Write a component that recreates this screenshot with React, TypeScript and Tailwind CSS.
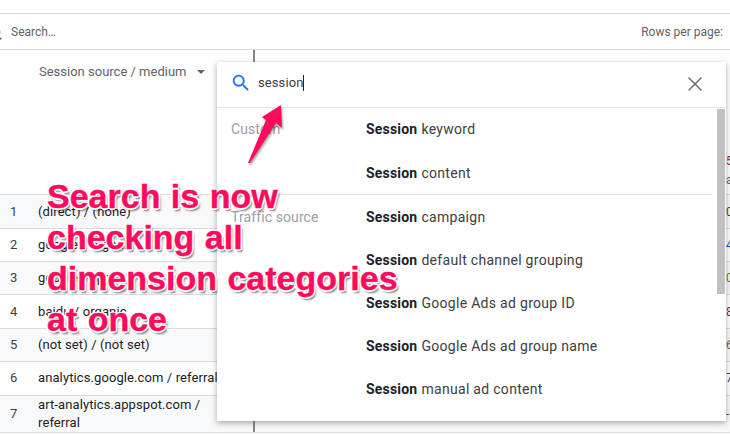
import React from "react";
import { Search, X } from "lucide-react";

const rows = [
  { n: "1", label: "(direct) / (none)", h: "h-[34px]", bg: "bg-[#f8f9fa]", tail: "0", tailColor: "text-[#7a3030]" },
  { n: "2", label: "google / organic", h: "h-[33px]", bg: "bg-white", tail: "4", tailColor: "text-[#1a4f9c]" },
  { n: "3", label: "google / cpc", h: "h-[33px]", bg: "bg-[#f8f9fa]", tail: "0", tailColor: "text-[#a06a20]" },
  { n: "4", label: "baidu / organic", h: "h-[34px]", bg: "bg-white", tail: "8", tailColor: "text-[#7a3030]" },
  { n: "5", label: "(not set) / (not set)", h: "h-[33px]", bg: "bg-[#f8f9fa]", tail: "6", tailColor: "text-[#8a5a30]" },
  { n: "6", label: "analytics.google.com / referral", h: "h-[34px] pb-[1px]", bg: "bg-white", tail: "7", tailColor: "text-[#30406a]" },
  { n: "7", label: "art-analytics.appspot.com / referral", h: "h-[37px]", bg: "bg-[#f8f9fa]", tail: "-", tailColor: "text-[#7a3030]" },
];

const trafficItems = [
  "campaign",
  "default channel grouping",
  "Google Ads ad group ID",
  "Google Ads ad group name",
  "manual ad content",
];

const Item = ({ name, pad = "" }: { name: string; pad?: string }) => (
  <div className={`h-[43px] ${pad} flex items-center text-[14px] text-[#3c4043] tracking-[0.3px]`}>
    <span className="font-bold text-[#202124] tracking-[0.2px] mr-1">Session</span>
    {name}
  </div>
);

const App = () => {
  return (
    <div className="relative w-[730px] h-[435px] overflow-hidden bg-white font-['Roboto',sans-serif]">
      {/* top bars */}
      <div className="h-[14px] border-b border-[#dadce0]" />
      <div className="h-[36px] border-b border-[#dadce0] flex items-center pr-[7px] text-[12px] text-[#5f6368]">
        <Search className="ml-[-13px] mt-[2px] text-[#5f6368]" size={16} strokeWidth={2} />
        <span className="ml-[8px]">Search…</span>
        <span className="ml-auto">Rows per page:</span>
      </div>

      {/* header */}
      <div className="h-[145px] flex border-b border-[#dadce0]">
        <div className="w-[253px] pl-[39px] pt-[12px] flex items-start text-[13px] text-[#5f6368]">
          Session source / medium
          <span className="ml-[11px] mt-[8px] w-0 h-0 border-x-[4px] border-x-transparent border-t-[4px] border-t-[#5f6368]" />
        </div>
        <div className="w-[2px] bg-[#80868b]" />
        <div className="flex-1 flex flex-col items-end justify-end pb-[4px] text-[12px] leading-[19px]">
          <span className="w-[4px] overflow-hidden text-[#7a3030]">5</span>
          <span className="w-[4px] overflow-hidden text-[#5f6368]">a</span>
        </div>
      </div>

      {/* table rows */}
      {rows.map((r) => (
        <div key={r.n} className={`${r.h} ${r.bg} flex border-b border-[#dadce0] text-[13px] text-[#202124]`}>
          <div className="w-[253px] flex items-center">
            <span className="w-[38px] pl-[10px] text-[#3c4043]">{r.n}</span>
            <span className="flex-1 leading-[18px] tracking-[0.1px] pr-[20px]">{r.label}</span>
          </div>
          <div className="w-[2px] bg-[#80868b]" />
          <div className={`flex-1 flex items-center justify-end text-[12px] ${r.tailColor}`}>
            <span className="w-[4px] overflow-hidden">{r.tail}</span>
          </div>
        </div>
      ))}

      {/* dimension picker */}
      <div className="absolute left-[217px] top-[62px] w-[509px] h-[359px] bg-white shadow-[0_2px_6px_rgba(60,64,67,0.45)] flex flex-col">
        <div className="h-[46px] border-b border-[#e3e5e8] flex items-center pb-[4px] pl-[13px] pr-[19px] shrink-0">
          <svg width="22" height="22" viewBox="0 0 24 24" fill="#1a73e8">
            <path d="M15.5 14h-.79l-.28-.27A6.47 6.47 0 0 0 16 9.5 6.5 6.5 0 1 0 9.5 16c1.61 0 3.09-.59 4.23-1.57l.27.28v.79l5 4.99L20.49 19l-4.99-5zm-6 0C7.01 14 5 11.99 5 9.5S7.01 5 9.5 5 14 7.01 14 9.5 11.99 14 9.5 14z" />
          </svg>
          <span className="ml-[6px] text-[13px] text-[#3c4043] tracking-[0.1px] border-r border-[#202124] leading-[16px]">session</span>
          <X className="ml-auto mt-[2px] text-[#6f7378]" size={24} strokeWidth={1.6} />
        </div>
        <div className="flex-1 flex relative">
          <div className="flex-1 flex flex-col mr-[14px]">
            <div className="flex border-b border-[#e3e5e8]">
              <div className="w-[149px] pl-[14px] h-[43px] flex items-center text-[14px] tracking-[0.1px] text-[#9aa0a6]">Custom</div>
              <div>
                <Item name="keyword" />
                <Item name="content" pad="pt-[2px]" />
              </div>
            </div>
            <div className="flex pt-[1px]">
              <div className="w-[149px] pl-[14px] h-[43px] flex items-center text-[14px] tracking-[0.1px] text-[#9aa0a6]">Traffic source</div>
              <div>
                {trafficItems.map((name) => (
                  <Item key={name} name={name} />
                ))}
              </div>
            </div>
          </div>
          <div className="absolute right-[1px] top-[1px] w-[8px] h-[185px] bg-[#c1c1c1]" />
        </div>
      </div>

      {/* arrow */}
      <svg className="absolute left-[240px] top-[100px] drop-shadow-[1px_2px_1px_rgba(0,0,0,0.4)]" width="50" height="70" viewBox="0 0 50 70">
        <polygon points="41,5 42,28 36,23 10,63 8,63 26,20 22,17" fill="#ff0a5c" />
      </svg>

      {/* annotation */}
      <div className="absolute left-[47px] top-[176px] text-[34px] leading-[41px] [word-spacing:1px] font-bold font-['Liberation_Sans',sans-serif] text-[#ff0a5c] whitespace-nowrap [-webkit-text-stroke:0.4px_#ff0a5c] [text-shadow:-1.5px_-1px_0_#fff,1.5px_-1px_0_#fff,-1.5px_1px_0_#fff,1.5px_1px_0_#fff,0_2px_0_#fff,2px_3px_2px_rgba(0,0,0,0.5)]">
        <div>Search is now</div>
        <div>checking all</div>
        <div>dimension categories</div>
        <div>at once</div>
      </div>
    </div>
  );
};

export default App;
